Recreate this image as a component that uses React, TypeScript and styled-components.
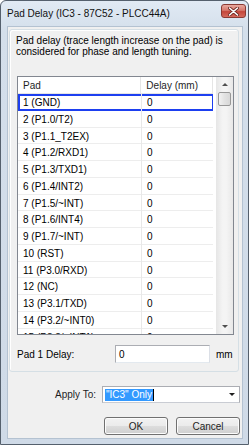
import styled, { createGlobalStyle } from "styled-components";

const GlobalStyle = createGlobalStyle`
  html, body {
    margin: 0;
    padding: 0;
    background: #ffffff;
  }
  * {
    box-sizing: border-box;
  }
`;

const pads = [
  "1 (GND)",
  "2 (P1.0/T2)",
  "3 (P1.1_T2EX)",
  "4 (P1.2/RXD1)",
  "5 (P1.3/TXD1)",
  "6 (P1.4/INT2)",
  "7 (P1.5/~INT)",
  "8 (P1.6/INT4)",
  "9 (P1.7/~INT)",
  "10 (RST)",
  "11 (P3.0/RXD)",
  "12 (NC)",
  "13 (P3.1/TXD)",
  "14 (P3.2/~INT0)",
  "15 (P3.3/~INT1)",
];

export default function App() {
  return (
    <>
      <GlobalStyle />
      <Window>
        <TitleBar>
          <Title>Pad Delay (IC3 - 87C52 - PLCC44A)</Title>
          <CloseButton>
            <svg width="11" height="9" viewBox="0 0 11 9">
              <path
                d="M1.5 1 L9.5 8 M9.5 1 L1.5 8"
                stroke="#6b2620"
                strokeWidth="3.2"
                strokeLinecap="round"
              />
              <path
                d="M1.5 1 L9.5 8 M9.5 1 L1.5 8"
                stroke="#ffffff"
                strokeWidth="1.6"
                strokeLinecap="round"
              />
            </svg>
          </CloseButton>
        </TitleBar>

        <Client>
          <GroupBox>
            <Description>
              Pad delay (trace length increase on the pad) is considered for
              phase and length tuning.
            </Description>

            <List>
              <Grid>
                <HeaderRow>
                  <HeaderCell $width={124}>Pad</HeaderCell>
                  <HeaderCell $width={72}>Delay (mm)</HeaderCell>
                </HeaderRow>
                <Body>
                  {pads.map((pad, i) => (
                    <Row key={pad} $focused={i === 0}>
                      <Cell $width={124}>{pad}</Cell>
                      <Cell $width={72}>0</Cell>
                    </Row>
                  ))}
                </Body>
              </Grid>

              <ScrollBar>
                <ArrowButton>
                  <Arrow $up />
                </ArrowButton>
                <Thumb />
                <Track />
                <ArrowButton>
                  <Arrow />
                </ArrowButton>
              </ScrollBar>
            </List>

            <DelayRow>
              <DelayLabel>Pad 1 Delay:</DelayLabel>
              <TextBox>0</TextBox>
              <Unit>mm</Unit>
            </DelayRow>
          </GroupBox>

          <ApplyRow>
            <ApplyLabel>Apply To:</ApplyLabel>
            <Combo>
              <Selected>"IC3" Only</Selected>
              <Caret />
              <ComboArrow />
            </Combo>
          </ApplyRow>

          <ButtonRow>
            <Button>OK</Button>
            <Button>Cancel</Button>
          </ButtonRow>
        </Client>
      </Window>
    </>
  );
}

const Window = styled.div`
  width: 249px;
  height: 445px;
  display: flex;
  flex-direction: column;
  border: 1px solid #55606d;
  border-radius: 6px 6px 0 0;
  background: linear-gradient(180deg, #e1eaf4 0%, #d4dfeb 30px, #cfdae7 100%);
  font-family: "Liberation Sans", Arial, sans-serif;
  font-size: 10px;
  color: #000000;
`;

const TitleBar = styled.div`
  height: 25px;
  display: flex;
  align-items: flex-start;
  justify-content: space-between;
  padding: 0 2px 0 6px;
`;

const Title = styled.div`
  margin-top: 7px;
  font-size: 10px;
  color: #111111;
`;

const CloseButton = styled.div`
  margin-top: 3px;
  width: 25px;
  height: 14px;
  display: flex;
  align-items: center;
  justify-content: center;
  border: 1px solid #8a3a33;
  border-radius: 3px;
  background: linear-gradient(
    180deg,
    #e9a99f 0%,
    #d6776b 45%,
    #c4473b 55%,
    #d5695c 100%
  );
`;

const Client = styled.div`
  flex: 1;
  margin: 0 5px 5px 6px;
  display: flex;
  flex-direction: column;
  background: #f0f0f0;
  border: 1px solid #b4c2d1;
`;

const GroupBox = styled.div`
  margin: 2px 3px 0 1px;
  height: 343px;
  display: flex;
  flex-direction: column;
  padding: 5px 4px 0 6px;
  border: 1px solid #d5dfe5;
  border-radius: 3px;
  box-shadow: inset 1px 1px 0 #ffffff;
`;

const Description = styled.div`
  line-height: 11px;
  height: 22px;
`;

const List = styled.div`
  margin: 19px 0 0 1px;
  height: 259px;
  flex-shrink: 0;
  display: flex;
  background: #ffffff;
  border: 1px solid #828790;
  overflow: hidden;
`;

const Grid = styled.div`
  flex: 1;
  display: flex;
  flex-direction: column;
  overflow: hidden;
`;

const HeaderRow = styled.div`
  height: 17px;
  flex-shrink: 0;
  display: flex;
  background: #ffffff;
  border-bottom: 1px solid #e5e5e5;
`;

const HeaderCell = styled.div<{ $width: number }>`
  width: ${(p) => p.$width}px;
  padding: 3px 0 0 5px;
  border-right: 1px solid #e5e5e5;
  color: #1e1e1e;
`;

const Body = styled.div`
  flex: 1;
  overflow: hidden;
`;

const Row = styled.div<{ $focused?: boolean }>`
  height: 16.75px;
  display: flex;
  box-shadow: ${(p) =>
    p.$focused ? "inset 0 0 0 2px #1d3ff0" : "inset 0 -1px 0 #ededed"};
  width: 196px;
`;

const Cell = styled.div<{ $width: number }>`
  width: ${(p) => p.$width}px;
  padding: 3px 0 0 5px;
  border-right: 1px solid #e8e8e8;
  white-space: nowrap;
  overflow: hidden;
`;

const ScrollBar = styled.div`
  width: 17px;
  margin-left: 3px;
  display: flex;
  flex-direction: column;
  background: linear-gradient(
    90deg,
    #e6e6e6,
    #f4f4f4 40%,
    #f4f4f4 60%,
    #e8e8e8
  );
`;

const ArrowButton = styled.div`
  height: 15px;
  display: flex;
  align-items: center;
  justify-content: center;
`;

const Arrow = styled.div<{ $up?: boolean }>`
  width: 0;
  height: 0;
  border-left: 3px solid transparent;
  border-right: 3px solid transparent;
  ${(p) =>
    p.$up
      ? "border-bottom: 3px solid #4f4f4f;"
      : "border-top: 3px solid #4f4f4f;"}
`;

const Thumb = styled.div`
  height: 14px;
  margin: 0 2px;
  border: 1px solid #989898;
  border-radius: 2px;
  background: linear-gradient(90deg, #f2f2f2, #e2e2e2 50%, #d8d8d8);
`;

const Track = styled.div`
  flex: 1;
`;

const DelayRow = styled.div`
  margin-top: 10px;
  height: 18px;
  display: flex;
  align-items: center;
  padding-left: 1px;
`;

const DelayLabel = styled.div`
  width: 98px;
`;

const TextBox = styled.div`
  width: 95px;
  height: 18px;
  padding: 3px 0 0 3px;
  background: #ffffff;
  border: 1px solid #abadb3;
  border-right-color: #dbdfe6;
  border-bottom-color: #e3e9ef;
`;

const Unit = styled.div`
  margin-left: 6px;
`;

const ApplyRow = styled.div`
  margin-top: 14px;
  height: 17px;
  display: flex;
  align-items: center;
  justify-content: flex-end;
  padding-right: 2px;
`;

const ApplyLabel = styled.div`
  margin-right: 6px;
  color: #1e1e1e;
`;

const Combo = styled.div`
  width: 138px;
  height: 17px;
  display: flex;
  align-items: center;
  padding-left: 2px;
  background: #ffffff;
  border: 1px solid #abadb3;
  border-bottom-color: #c9ccd3;
`;

const Selected = styled.span`
  background: #3399ff;
  color: #ffffff;
  line-height: 12px;
  padding: 0 1px;
`;

const Caret = styled.span`
  width: 1px;
  height: 12px;
  background: #000000;
`;

const ComboArrow = styled.div`
  margin-left: auto;
  margin-right: 4px;
  width: 0;
  height: 0;
  border-left: 3px solid transparent;
  border-right: 3px solid transparent;
  border-top: 3px solid #1e1e1e;
`;

const ButtonRow = styled.div`
  margin-top: 14px;
  display: flex;
  justify-content: flex-end;
  gap: 8px;
  padding-right: 2px;
`;

const Button = styled.div`
  width: 64px;
  height: 18px;
  display: flex;
  align-items: center;
  justify-content: center;
  border: 1px solid #707070;
  border-radius: 3px;
  background: linear-gradient(
    180deg,
    #f2f2f2 0%,
    #ebebeb 50%,
    #dddddd 51%,
    #cfcfcf 100%
  );
  box-shadow: inset 0 0 0 1px #fcfcfc;
  color: #1e1e1e;
`;
